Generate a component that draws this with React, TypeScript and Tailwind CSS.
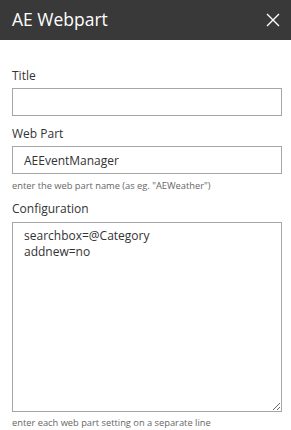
import React from "react";

export default function App() {
  return (
    <div className="w-[291px] h-[430px] bg-white overflow-hidden" style={{ fontFamily: '"Open Sans", "Noto Sans", sans-serif' }}>
      <div className="h-10 bg-[#393939] flex items-center justify-between pl-[12px] pr-[11px]">
        <span className="text-white text-[17.5px] leading-none">AE Webpart</span>
        <svg width="14" height="14" viewBox="0 0 14 14" className="text-white">
          <path d="M1 1 L13 13 M13 1 L1 13" stroke="currentColor" strokeWidth="1.4" fill="none" />
        </svg>
      </div>
      <div className="pl-3 pr-[9px] pt-[28px] flex flex-col">
        <label className="text-[12px] text-[#333] leading-4 h-4">Title</label>
        <input className="mt-[4px] h-[28px] w-full border border-[#a6a6a6] outline-none px-[11px] text-[12px] text-[#333]" />
        <label className="mt-[10px] text-[12px] text-[#333] leading-4 h-4">Web Part</label>
        <input
          className="mt-[4px] h-[28px] w-full border border-[#a6a6a6] outline-none px-[11px] text-[12px] text-[#333]"
          defaultValue="AEEventManager"
        />
        <div className="mt-[6px] text-[9.3px] text-[#666] leading-3 whitespace-nowrap">enter the web part name (as eg. "AEWeather")</div>
        <label className="mt-[9px] text-[12px] text-[#333] leading-4 h-4">Configuration</label>
        <textarea
          className="mt-[5px] h-[190px] w-full border border-[#a6a6a6] outline-none px-[11px] pt-[5px] text-[12px] leading-4 text-[#333] resize-y"
          defaultValue={"searchbox=@Category\naddnew=no"}
        />
        <div className="mt-[5px] text-[9.3px] text-[#666] leading-3 whitespace-nowrap">enter each web part setting on a separate line</div>
      </div>
    </div>
  );
}
